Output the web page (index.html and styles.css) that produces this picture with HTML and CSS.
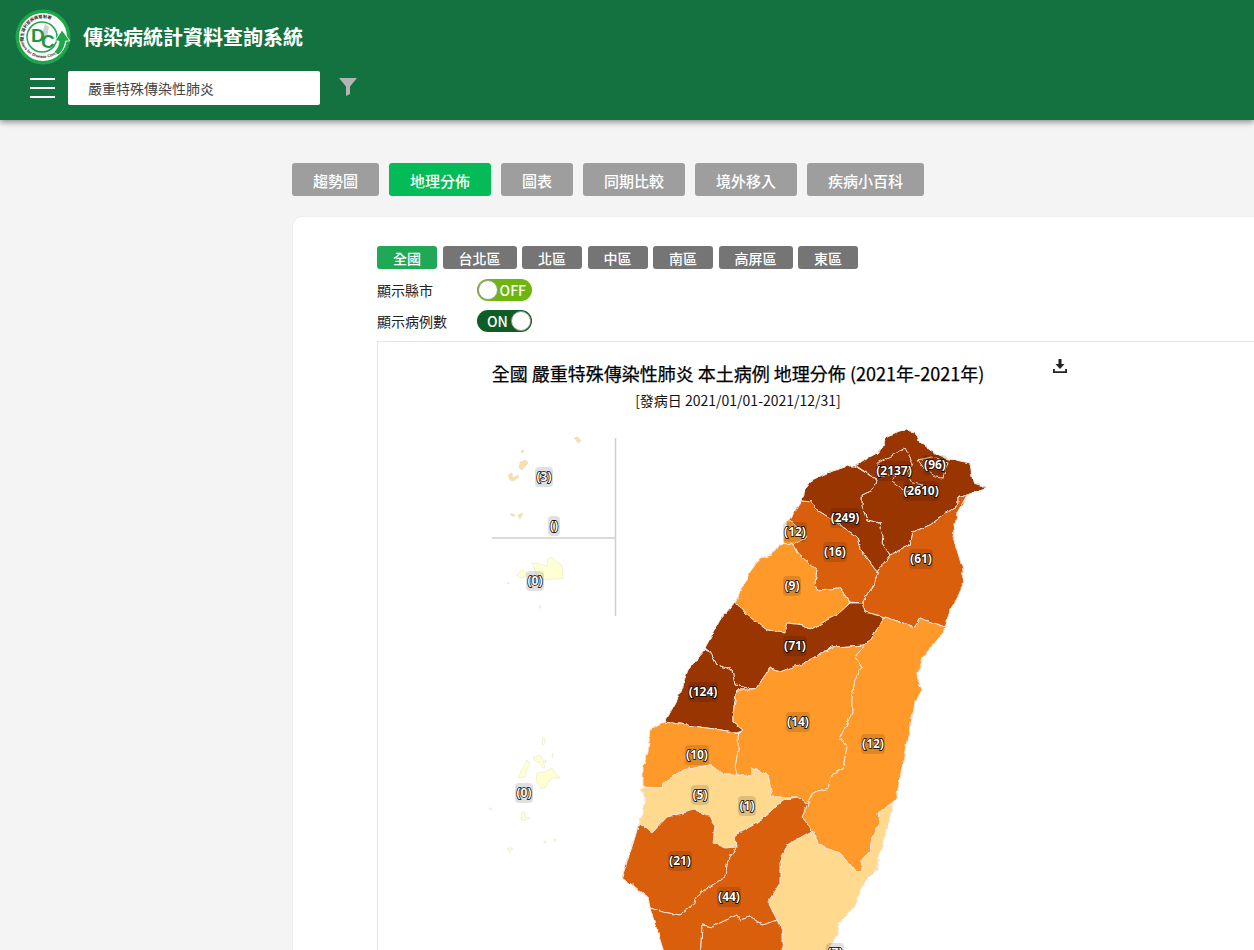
FILE: index.html
```html
<!DOCTYPE html>
<html lang="zh-Hant">
<head>
<meta charset="utf-8">
<title>傳染病統計資料查詢系統</title>
<link rel="stylesheet" href="styles.css">
</head>
<body>
<header class="topbar">
  <div class="brand">
    <svg class="logo" viewBox="0 0 56 56" width="56" height="56">
      <defs>
        <path id="ringTop" d="M9 33a19.500 19.500 0 0 1 36-14"/>
        <path id="ringBottom" d="M4.500 26a23.500 23.500 0 0 0 38 18"/>
      </defs>
      <circle cx="28" cy="28" r="27.500" fill="#1ea64b"/>
      <circle cx="28" cy="28" r="24" fill="#fff"/>
      <circle cx="27" cy="28" r="15" fill="none" stroke="#1ea64b" stroke-width="1.500"/>
      <path d="M30 15l4 3-2 11-3 7-3-8z" fill="#d2d2d2"/>
      <text class="logo-ring" font-size="4.200"><textPath href="#ringTop" startOffset="2%">衛生福利部疾病管制署</textPath></text>
      <text class="logo-ring" font-size="4"><textPath href="#ringBottom" startOffset="4%">Centers for Disease Control</textPath></text>
      <text class="logo-d" x="16" y="33">D</text>
      <text class="logo-c" x="26" y="39">C</text>
      <path d="M47 21l8 11h-4.500c-.5 6-3.500 11-7.500 14l-4-3c3-3 5-7 5-11h-4z" fill="#1ea64b" stroke="#fff" stroke-width=".8"/>
    </svg>
    <h1 class="brand-title">傳染病統計資料查詢系統</h1>
  </div>
  <div class="toolbar">
    <button class="burger" aria-label="選單"><span></span><span></span><span></span></button>
    <div class="search">嚴重特殊傳染性肺炎</div>
    <svg class="funnel" viewBox="0 0 20 20" width="20" height="20"><path d="M1 1h18l-7 8.500v7.500l-4 2v-9.500z"/></svg>
  </div>
</header>

<main class="main">
  <nav class="tabs">
    <a class="tab">趨勢圖</a>
    <a class="tab tab-active">地理分佈</a>
    <a class="tab">圖表</a>
    <a class="tab">同期比較</a>
    <a class="tab">境外移入</a>
    <a class="tab">疾病小百科</a>
  </nav>

  <section class="card">
    <div class="regions">
      <a class="region region-active">全國</a>
      <a class="region">台北區</a>
      <a class="region">北區</a>
      <a class="region">中區</a>
      <a class="region">南區</a>
      <a class="region">高屏區</a>
      <a class="region">東區</a>
    </div>
    <div class="switch-row">
      <span class="switch-label">顯示縣市</span>
      <span class="switch switch-off"><i class="knob"></i><b>OFF</b></span>
    </div>
    <div class="switch-row">
      <span class="switch-label">顯示病例數</span>
      <span class="switch switch-on"><b>ON</b><i class="knob"></i></span>
    </div>

    <div class="chart">
      <div class="chart-inner">
        <svg class="download" viewBox="0 0 14 14" width="14" height="14"><path d="M5.500 0h3v5h3L7 10 2.500 5h3zM0 10h1.800v2.200h10.400V10H14v4H0z"/></svg>
        <h2 class="chart-title">全國 嚴重特殊傳染性肺炎 本土病例 地理分佈 (2021年-2021年)</h2>
        <p class="chart-sub">[發病日 2021/01/01-2021/12/31]</p>
        <svg class="map" viewBox="378 420 720 560" width="720" height="560">
          <defs>
            <filter id="rough" filterUnits="userSpaceOnUse" x="600" y="420" width="400" height="560">
              <feTurbulence type="fractalNoise" baseFrequency="0.14" numOctaves="2" seed="4"/>
              <feDisplacementMap in="SourceGraphic" scale="4" xChannelSelector="R" yChannelSelector="G"/>
            </filter>
          </defs>
          <path class="divider" d="M615.500 438V616M492 538H615"/>
          <g class="pale">
            <path d="M574 438l4-1 3 4-3 2-2-3z"/>
            <path d="M520 462l6-2 2 3-6 7-3-2z"/>
            <path d="M508 475l4-2 1 5 5-3 1 2-6 4-3-1z"/>
            <path d="M521 451l2-1 1 2-2 1z"/>
            <path d="M510 514l4 0 1 2-3 0z"/>
            <path d="M518 515l5-2-3 6z"/>
          </g>
          <g class="palest">
            <path d="M552 557l4 4 6 4 1 13-8 1-8 1-7-1-4-6-4-10 8 1 7 2 1-7z"/>
            <path d="M517 575l5-5 5 2-2 5-4 1z"/>
            <path d="M507 583l2-1 0 2z"/>
            <path d="M539 606l2 0 0 2-2 0z"/>
            <path d="M537 773l8-1 7-4 3 5 5 5-7 0-5 4-2 5-5 2-1-4-4-3z"/>
            <path d="M533 757l7-2 3 5 2 7-2 1-4-6-4-1z"/>
            <path d="M527 760l3 3-3 6-2 8-7 1 5-10z"/>
            <path d="M543 737l2 2-1 2 2 1-3 3-1-3z"/>
            <path d="M552 755l1-2 0 3-1 2zM545 760l1 0-1 3z"/>
            <path d="M489 808l2 0 1 2-2 0z"/>
            <path d="M522 812l2 0 1 5 5 1-4 2-5 0z"/>
            <path d="M507 848h6l-3 4z"/>
            <path d="M544 841l2 0 0 2-2 0zM554 839l2 0-1 3z"/>
          </g>
          <g class="area">
            <polygon class="c5" points="855,465 877,453 883,445 887,437 905,430 915,432 920,442 930,450 945,458 970,463 973,483 987,487 967,495 958,498 958,505 930,525 913,532 910,545 890,555 882,543 883,537 880,523 867,520 862,507 862,495 873,490 877,480"/>
            <polygon class="c5" points="802,501 805,490 812,480 827,473 848,466 855,466 877,480 873,490 862,495 862,507 867,520 880,523 883,537 882,543 890,555 877,572 868,560 860,550 857,537 833,520 817,510 812,502"/>
            <polygon class="c5" points="893,455 905,448 913,463 907,472 913,483 923,485 907,492 900,488 892,482 895,475 877,475 878,463"/>
            <polygon class="c5" points="918,460 932,457 948,462 943,478 935,477 925,470"/>
            <polygon class="c4" points="890,555 910,545 913,532 930,525 958,505 958,498 967,495 957,513 953,537 963,570 962,590 950,610 945,627 920,618 915,627 885,617 865,612 862,603 875,583 877,572"/>
            <polygon class="c4" points="802,501 812,502 817,510 833,520 857,537 860,550 868,560 877,572 875,583 862,603 850,602 840,588 817,590 815,583 817,570 797,553 792,543 790,520"/>
            <polygon class="c3" points="787,520 793,522 807,537 793,545 783,543"/>
            <polygon class="c3" points="780,545 772,555 760,558 750,572 735,602 747,615 767,630 785,632 788,623 803,625 810,630 827,620 837,615 850,603 840,588 817,590 815,583 817,570 797,553 792,543"/>
            <polygon class="c5" points="735,602 720,620 705,648 710,652 717,665 732,670 735,685 755,690 770,668 780,672 793,667 800,665 833,647 865,645 870,640 885,617 865,612 862,603 850,603 837,615 827,620 810,630 803,625 788,623 785,632 767,630 747,615"/>
            <polygon class="c5" points="705,650 688,670 677,700 665,722 700,727 735,732 743,730 733,722 733,713 737,690 755,690 735,685 732,670 717,665 710,652"/>
            <polygon class="c3" points="755,690 770,668 780,672 793,667 800,665 833,647 865,645 855,657 862,667 855,680 852,697 852,713 840,738 847,747 843,768 832,775 828,788 813,793 808,803 797,797 772,797 768,775 752,768 752,777 737,775 735,767 738,750 738,735 743,730 733,722 733,713 737,690"/>
            <polygon class="c3" points="885,617 915,627 920,618 945,627 943,633 923,657 917,677 922,690 915,702 913,713 905,750 897,795 893,803 878,813 880,822 872,837 870,850 862,860 862,870 855,872 840,853 830,850 818,843 812,830 802,817 808,803 813,793 828,788 832,775 843,768 847,747 840,738 852,713 852,697 855,680 862,667 855,657 865,645 870,640"/>
            <polygon class="c2" points="893,803 888,827 878,857 878,870 868,877 853,907 838,925 838,935 827,950 825,965 783,965 783,933 777,920 768,902 780,883 780,862 787,845 810,832 812,830 818,843 830,850 840,853 855,872 862,870 862,860 870,850 872,837 880,822 878,813"/>
            <polygon class="c3" points="665,722 650,730 648,752 643,767 643,787 662,788 663,783 683,770 710,765 725,775 737,775 735,767 738,750 738,735 735,732 700,727"/>
            <polygon class="c2" points="639,788 645,795 643,815 639,823 652,833 667,817 695,810 707,815 715,825 713,843 725,848 737,847 735,835 757,823 772,810 783,800 797,797 772,797 768,775 752,768 752,777 737,775 725,775 710,765 683,770 663,783 662,788"/>
            <polygon class="c4" points="639,823 635,837 630,853 622,877 648,897 650,908 663,912 680,915 690,908 700,893 725,877 728,860 737,847 725,848 713,843 715,825 707,815 695,810 667,817 652,833"/>
            <polygon class="c4" points="737,847 735,835 757,823 772,810 783,800 797,797 808,803 802,817 812,830 810,832 787,845 780,862 780,883 768,902 777,920 763,925 750,917 740,920 737,915 722,922 713,927 702,925 700,965 668,965 650,908 663,912 680,915 690,908 700,893 725,877 728,860"/>
            <polygon class="c4" points="702,925 713,927 722,922 737,915 740,920 750,917 763,925 777,920 783,933 783,965 700,965"/>
          </g>
          <g class="labels">
            <rect x="876" y="461" width="36" height="20" rx="4"/><text x="894" y="475">(2137)</text>
            <rect x="923" y="455" width="24" height="20" rx="4"/><text x="935" y="469">(96)</text>
            <rect x="903" y="481" width="36" height="20" rx="4"/><text x="921" y="495">(2610)</text>
            <rect x="830" y="508" width="30" height="20" rx="4"/><text x="845" y="522">(249)</text>
            <rect x="783" y="522" width="24" height="20" rx="4"/><text x="795" y="536">(12)</text>
            <rect x="823" y="542" width="24" height="20" rx="4"/><text x="835" y="556">(16)</text>
            <rect x="909" y="549" width="24" height="20" rx="4"/><text x="921" y="563">(61)</text>
            <rect x="783" y="576" width="18" height="20" rx="4"/><text x="792" y="590">(9)</text>
            <rect x="783" y="636" width="24" height="20" rx="4"/><text x="795" y="650">(71)</text>
            <rect x="688" y="682" width="30" height="20" rx="4"/><text x="703" y="696">(124)</text>
            <rect x="786" y="712" width="24" height="20" rx="4"/><text x="798" y="726">(14)</text>
            <rect x="861" y="734" width="24" height="20" rx="4"/><text x="873" y="748">(12)</text>
            <rect x="685" y="745" width="24" height="20" rx="4"/><text x="697" y="759">(10)</text>
            <rect x="691" y="785" width="18" height="20" rx="4"/><text x="700" y="799">(5)</text>
            <rect x="738" y="796" width="18" height="20" rx="4"/><text x="747" y="810">(1)</text>
            <rect x="668" y="851" width="24" height="20" rx="4"/><text x="680" y="865">(21)</text>
            <rect x="717" y="887" width="24" height="20" rx="4"/><text x="729" y="901">(44)</text>
            <rect x="826" y="943" width="18" height="20" rx="4"/><text x="835" y="957">(7)</text>
            <rect x="535" y="467" width="18" height="20" rx="4"/><text x="544" y="481">(3)</text>
            <rect x="548" y="516" width="12" height="20" rx="4"/><text x="554" y="530">()</text>
            <rect x="526" y="571" width="18" height="20" rx="4"/><text x="535" y="585">(0)</text>
            <rect x="515" y="783" width="18" height="20" rx="4"/><text x="524" y="797">(0)</text>
          </g>
        </svg>
      </div>
    </div>
  </section>
</main>
</body>
</html>
```
FILE: styles.css
```css
* { box-sizing: border-box; }
html, body { height: 950px; overflow: hidden; }
body {
  margin: 0;
  background: #f5f4f5;
  font-family: "Noto Sans CJK TC", "Noto Sans", sans-serif;
  color: #212529;
}

/* header */
.topbar {
  height: 120px;
  background: #147240;
  box-shadow: 0 2px 6px rgba(0, 0, 0, .45);
  padding: 9px 0 0 15px;
}
.brand { display: flex; align-items: center; gap: 12px; height: 56px; }
.logo { flex: none; }
.logo-ring { font-family: "Liberation Sans", "Noto Sans CJK TC", sans-serif; font-weight: 700; fill: #2a2a2a; }
.logo-d, .logo-c { font-family: "Liberation Sans", sans-serif; font-weight: 700; fill: #1a9a48; font-size: 19px; }
.brand-title { margin: 0; font-size: 20px; font-weight: 700; color: #fff; line-height: 56px; }
.toolbar { display: flex; align-items: center; margin-top: 6px; padding-left: 15px; height: 34px; }
.burger {
  display: flex; flex-direction: column; justify-content: space-between;
  width: 25px; height: 20px; padding: 0; margin-right: 13px;
  border: 0; background: none;
}
.burger span { display: block; height: 2px; background: #fff; }
.search {
  width: 252px; height: 34px; padding-left: 20px;
  background: #fff; border-radius: 2px;
  font-size: 14px; line-height: 35px; color: #444;
}
.funnel { margin-left: 18px; margin-top: -2px; fill: #b4b4b4; }

/* tabs */
.main { padding: 43px 0 0 292px; }
.tabs { display: flex; gap: 10px; }
.tab {
  height: 33px; padding: 0 21px;
  background: #9e9e9e; border-radius: 3px;
  color: #fff; font-size: 15px; font-weight: 500; line-height: 36px;
}
.tab-active { background: #04bb57; }

/* card */
.card {
  width: 1100px; height: 900px;
  margin-top: 20px; padding: 29px 0 0 84px;
  background: #fff;
  border: 1px solid #eeeeee;
  border-radius: 10px;
}
.regions { display: flex; gap: 5.500px; }
.region {
  height: 23px; padding: 0 16px;
  background: #757575; border-radius: 3px;
  color: #fff; font-size: 14px; font-weight: 500; line-height: 25px;
}
.region-active { background: #1fa855; }
.switch-row { display: flex; align-items: center; height: 22px; }
.regions + .switch-row { margin-top: 10px; }
.switch-row + .switch-row { margin-top: 9px; }
.switch-label { width: 100px; font-size: 14px; color: #222; }
.switch {
  display: flex; align-items: center; justify-content: space-between;
  width: 55px; height: 22px; padding: 0 1px;
  border-radius: 11px; color: #fff; font-size: 14px;
}
.switch b { font-weight: 500; }
.switch-off { background: #6db60f; }
.switch-off b { margin-right: 5px; }
.switch-on { background: #0f5c27; }
.switch-on b { margin-left: 9px; }
.knob { display: block; width: 20px; height: 20px; background: #fff; border: 1px solid #999; border-radius: 50%; }

/* chart */
.chart {
  margin-top: 9px; width: 1000px; height: 700px;
  border: 1px solid #e6e6e6; border-right: 0; border-bottom: 0;
  background: #fff;
}
.chart-inner { position: relative; width: 720px; padding-top: 17px; }
.download { position: absolute; left: 675px; top: 17px; fill: #222; }
.chart-title { margin: 0; font-size: 18px; font-weight: 400; -webkit-text-stroke: .25px #000; line-height: 28px; color: #000; text-align: center; }
.chart-sub { margin: 0; font-size: 14px; line-height: 26px; color: #111; text-align: center; }
.map { display: block; margin-top: 7px; }
.divider { fill: none; stroke: #cfcfcf; stroke-width: 1.500; }
.pale path { fill: #f7dfae; stroke: #e4d6b8; stroke-width: .5; }
.palest path { fill: #ffffd4; stroke: #e2e2c0; stroke-width: .5; }
.area { filter: url(#rough); }
.area polygon { stroke: #efe6dc; stroke-width: 1; stroke-linejoin: round; }
.c5 { fill: #993404; }
.c4 { fill: #d95f0e; }
.c3 { fill: #fe9929; }
.c2 { fill: #fed98e; }
.labels rect { fill: rgba(0, 0, 0, .12); }
.labels text {
  font-family: "Noto Sans", sans-serif;
  font-size: 12px; font-weight: 700;
  text-anchor: middle;
  fill: #fff; stroke: #000; stroke-width: 1.400; paint-order: stroke;
}
```
